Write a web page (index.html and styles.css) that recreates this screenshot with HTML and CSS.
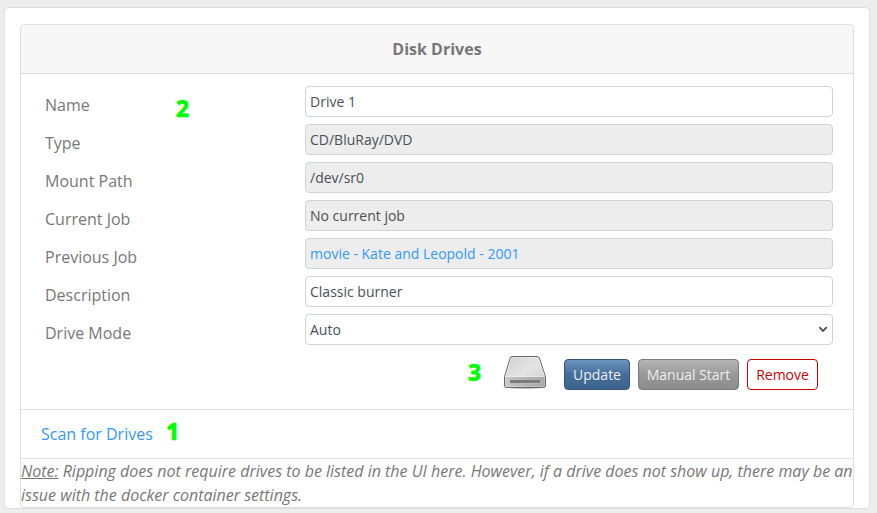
FILE: index.html
```html
<!DOCTYPE html>
<html lang="en">
<head>
<meta charset="utf-8">
<title>Disk Drives</title>
<link rel="stylesheet" href="styles.css">
</head>
<body>
<main class="panel">
  <section class="card">
    <header class="card-header">Disk Drives</header>
    <form class="card-body">
      <div class="row"><label for="name">Name</label><input id="name" class="field" type="text" value="Drive 1"></div>
      <div class="row"><span>Type</span><div class="field readonly">CD/BluRay/DVD</div></div>
      <div class="row"><span>Mount Path</span><div class="field readonly">/dev/sr0</div></div>
      <div class="row"><span>Current Job</span><div class="field readonly">No current job</div></div>
      <div class="row"><span>Previous Job</span><div class="field readonly"><a href="#">movie - Kate and Leopold - 2001</a></div></div>
      <div class="row"><label for="desc">Description</label><input id="desc" class="field" type="text" value="Classic burner"></div>
      <div class="row"><label for="mode">Drive Mode</label><div class="select"><select id="mode" class="field"><option>Auto</option></select><svg class="chevron" width="10" height="7" viewBox="0 0 10 7" aria-hidden="true"><path d="M1.200 1.200L5 5L8.800 1.200" fill="none" stroke="#495057" stroke-width="1.800"/></svg></div></div>
      <div class="actions">
        <svg class="drive" width="48" height="40" viewBox="0 0 48 40" aria-hidden="true">
          <defs>
            <linearGradient id="top" x1="0" y1="0" x2="1" y2="1"><stop offset="0" stop-color="#d0d0d0"/><stop offset=".5" stop-color="#e4e4e4"/><stop offset="1" stop-color="#c8c8c8"/></linearGradient>
            <linearGradient id="front" x1="0" y1="0" x2="1" y2="0"><stop offset="0" stop-color="#c8c8c8"/><stop offset=".5" stop-color="#b4b4b4"/><stop offset="1" stop-color="#aaa"/></linearGradient>
            <radialGradient id="shade"><stop offset=".6" stop-color="#000" stop-opacity=".3"/><stop offset="1" stop-color="#000" stop-opacity="0"/></radialGradient>
          </defs>
          <ellipse cx="24" cy="32.500" rx="24" ry="3" fill="url(#shade)"/>
          <path d="M11 2.500H36Q37.700 2.500 38.300 4L43.800 20.500Q44.500 21.500 44.500 22.500V31Q44.500 33.500 42.500 33.500H5.500Q3.500 33.500 3.500 31V22.500Q3.500 21.500 4.200 20.500L9.200 4Q9.800 2.500 11 2.500Z" fill="url(#top)" stroke="#666"/>
          <path d="M4.500 23H43.500V31Q43.500 32.500 42 32.500H6Q4.500 32.500 4.500 31Z" fill="url(#front)"/>
          <path d="M5 22.500H43M10.300 4L5 21M37.300 4L43 21M11 3.500H36.500" fill="none" stroke="#f4f4f4" stroke-opacity=".5"/>
          <rect x="9" y="26" width="30" height="3" fill="#7c7c7c"/>
          <path d="M9 29.500H39" stroke="#bbb"/>
        </svg>
        <button type="button" class="btn update">Update</button>
        <button type="button" class="btn manual">Manual Start</button>
        <button type="button" class="btn remove">Remove</button>
      </div>
    </form>
    <div class="scan"><a href="#">Scan for Drives</a></div>
    <p class="note"><span class="note-label">Note:</span> Ripping does not require drives to be listed in the UI here. However, if a drive does not show up, there may be an issue with the docker container settings.</p>
  </section>
</main>
<span class="marker m1">1</span>
<span class="marker m2">2</span>
<span class="marker m3">3</span>
</body>
</html>
```
FILE: styles.css
```css
* { box-sizing: border-box; }
body {
  margin: 0;
  padding: 7px 7px 4px 4px;
  height: 513px;
  overflow: hidden;
  background: #ededed;
  color: #777;
  font: 16px/24px "Open Sans", sans-serif;
}
a { color: #3399f3; text-decoration: none; }
.panel {
  height: 502px;
  padding: 16px 15px 0;
  background: #fff;
  border: 1px solid #dfdfdf;
  border-radius: 4px;
}
.card { height: 484px; border: 1px solid #dfdfdf; border-radius: 4px; }
.card-header {
  height: 49px;
  padding: 12px 20px;
  background: #f7f7f7;
  border-bottom: 1px solid #d9d9d9;
  border-radius: 3px 3px 0 0;
  text-align: center;
  font-weight: 700;
}
.card-body { height: 335px; padding: 12px 20px 0 24px; }
.row {
  display: grid;
  grid-template-columns: 260px 528px;
  height: 38px;
}
.row > :first-child { padding-top: 7px; }
.field {
  width: 528px;
  height: 31px;
  padding: 4px;
  border: 1px solid #ced4da;
  border-radius: 4px;
  background: #fff;
  color: #495057;
  font: 14px/21px "Open Sans", sans-serif;
}
.readonly { background: #ededed; }
.select { position: relative; height: 31px; }
select.field { display: block; appearance: none; padding: 4px; }
.chevron { position: absolute; right: 5px; top: 12px; pointer-events: none; }
.actions {
  display: flex;
  justify-content: flex-end;
  gap: 8px;
  padding: 7px 15px 0 0;
}
.drive { margin: -5px 7px 0 0; }
.btn {
  height: 31px;
  padding: 4px 0;
  border: 1px solid;
  border-radius: 4px;
  color: #eee;
  font: 14px/21px "Open Sans", sans-serif;
  white-space: nowrap;
}
.update { width: 66px; background: linear-gradient(#6d94bf, #446e9b 50%, #3e648d); border-color: #345578; }
.manual { width: 101px; background: linear-gradient(#b6b6b6, #999 50%, #8c8c8c); border-color: #7a7a7a; }
.remove { width: 71px; background: #fff; border-color: #cd0200; color: #cd0200; }
.scan {
  height: 50px;
  padding: 12px 20px;
  border: solid #dfdfdf;
  border-width: 1px 0;
}
.note { margin: 0; font-style: italic; }
.note-label { text-decoration: underline; }
.marker {
  position: absolute;
  color: #0f0;
  font: 800 23px/30px "Noto Sans", "Open Sans", sans-serif;
  -webkit-text-stroke: .5px #0f0;
}
.m1 { left: 166px; top: 416px; }
.m2 { left: 176px; top: 93px; }
.m3 { left: 468px; top: 357px; }
```
